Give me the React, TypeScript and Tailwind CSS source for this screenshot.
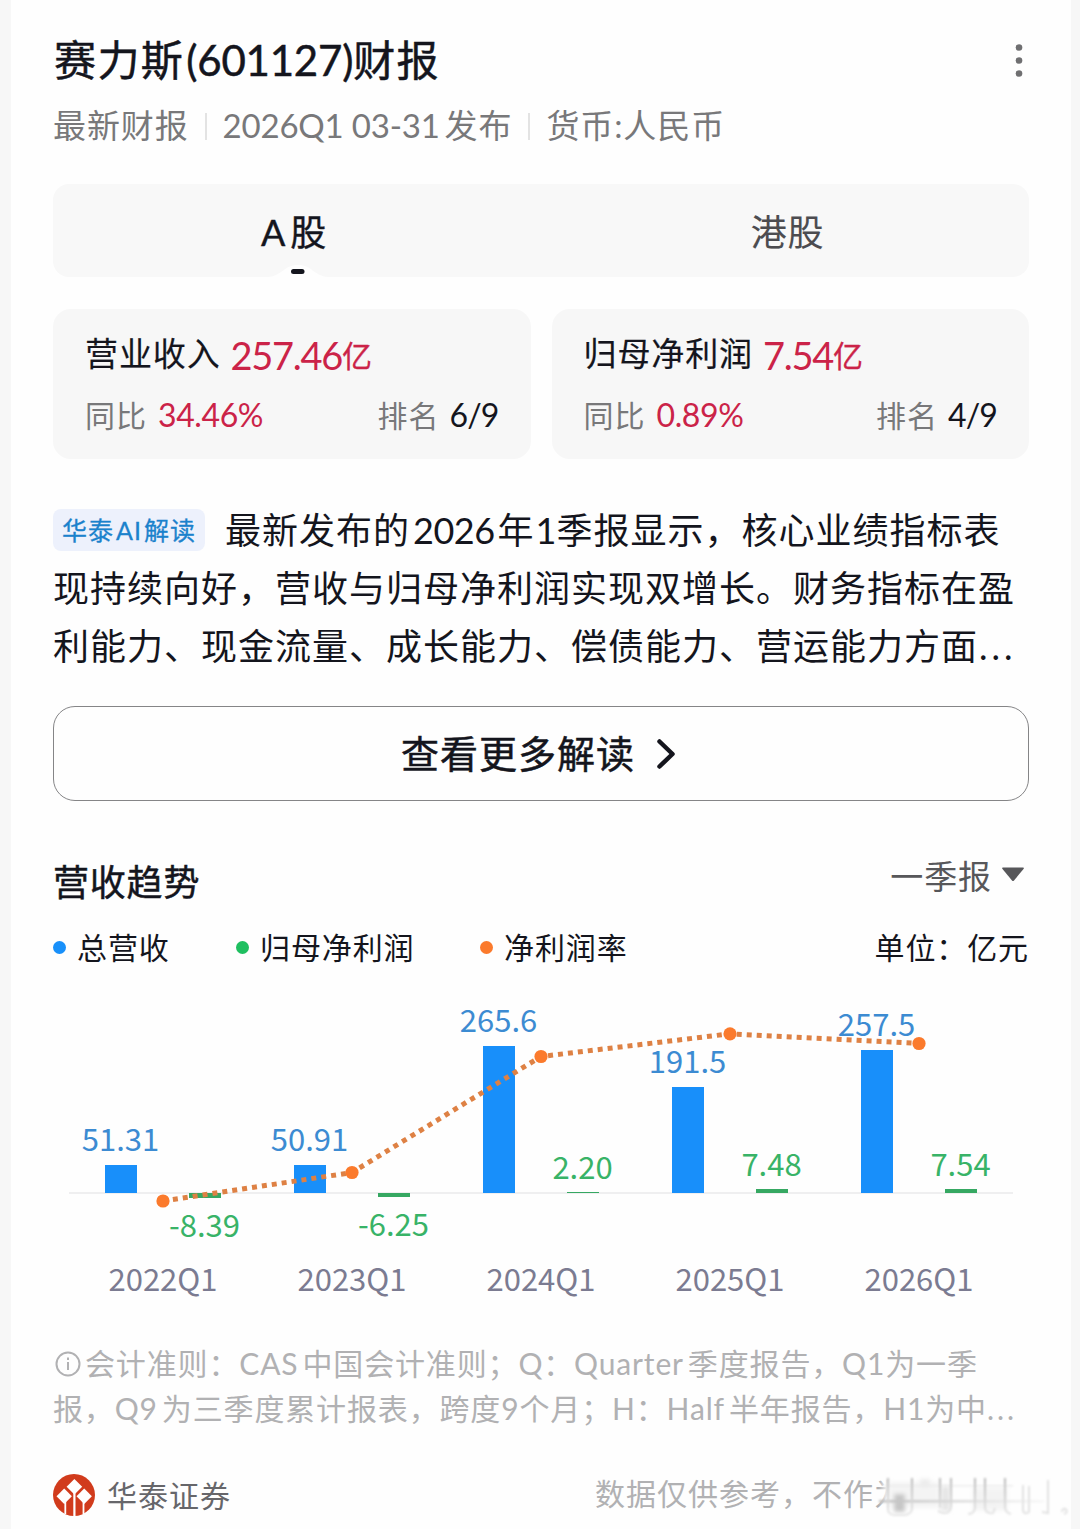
import React from 'react';

interface Metric {
  label: string;
  value: string;
  yoy: string;
  rank: string;
}

interface Quarter {
  name: string;
  revenue: string;
  profit: string;
  x: number;
  barTop: number;
  profitTop: number;
  profitHeight: number;
  profitLabelY: number;
  rateY: number;
}

const metrics: Metric[] = [
  { label: '营业收入', value: '257.46', yoy: '34.46%', rank: '6/9' },
  { label: '归母净利润', value: '7.54', yoy: '0.89%', rank: '4/9' },
];

const legend = [
  { label: '总营收', dot: 'bg-[#1890fa]', width: 'w-[183px]' },
  { label: '归母净利润', dot: 'bg-[#1fbf60]', width: 'w-[244px]' },
  { label: '净利润率', dot: 'bg-[#fb7a2c]', width: 'w-[160px]' },
];

const quarters: Quarter[] = [
  { name: '2022Q1', revenue: '51.31', profit: '-8.39', x: 110, barTop: 175, profitTop: 203, profitHeight: 5, profitLabelY: 247, rateY: 211 },
  { name: '2023Q1', revenue: '50.91', profit: '-6.25', x: 299, barTop: 175, profitTop: 203, profitHeight: 4, profitLabelY: 246, rateY: 182.5 },
  { name: '2024Q1', revenue: '265.6', profit: '2.20', x: 488, barTop: 56, profitTop: 202, profitHeight: 1, profitLabelY: 189, rateY: 66.5 },
  { name: '2025Q1', revenue: '191.5', profit: '7.48', x: 677, barTop: 97, profitTop: 199, profitHeight: 4, profitLabelY: 186, rateY: 43.8 },
  { name: '2026Q1', revenue: '257.5', profit: '7.54', x: 866, barTop: 60, profitTop: 199, profitHeight: 4, profitLabelY: 186, rateY: 53.5 },
];

const MetricCard: React.FC<Metric> = ({ label, value, yoy, rank }) => (
  <div className="h-[150px] flex-1 rounded-[18px] bg-[#f7f7f7] pl-8 pr-8 pt-[19px]">
    <div className="flex h-[52px] items-center whitespace-nowrap">
      <span className="text-[33px] tracking-[0.9px] text-[#14151d] [-webkit-text-stroke:0.2px]">{label}</span>
      <span className="ml-2.5 mt-0.5 flex items-center text-[#cb2348]">
        <span className="text-[38px] tracking-[-1.3px]">{value}</span>
        <span className="text-[30px] [-webkit-text-stroke:0.3px]">亿</span>
      </span>
    </div>
    <div className="mt-2 flex h-[54px] items-center justify-between text-[32px]">
      <div className="flex items-center">
        <span className="text-[30px] tracking-[1px] text-[#78787a]">同比</span>
        <span className="ml-[11px] tracking-[-0.4px] text-[#cb2348]">{yoy}</span>
      </div>
      <div className="flex items-center">
        <span className="text-[30px] tracking-[1px] text-[#78787a]">排名</span>
        <span className="ml-2.5 tracking-[-0.9px] text-[#14151d]">{rank}</span>
      </div>
    </div>
  </div>
);

const TrendChart: React.FC = () => (
  <svg
    width="976"
    height="320"
    viewBox="0 0 976 320"
    className="block overflow-visible font-['Noto_Sans_CJK_SC',sans-serif] text-[31px]"
    textAnchor="middle"
  >
    <rect x="16" y="202" width="944" height="2" fill="#efeff0" />
    {quarters.map((q) => (
      <g key={q.name}>
        <rect x={q.x - 58} y={q.barTop} width="32" height={203 - q.barTop} fill="#188ffa" />
        <rect x={q.x + 26} y={q.profitTop} width="32" height={q.profitHeight} fill="#36a862" />
      </g>
    ))}
    <polyline
      points={quarters.map((q) => `${q.x},${q.rateY}`).join(' ')}
      fill="none"
      stroke="#de8144"
      strokeWidth="5"
      strokeDasharray="5 5"
    />
    {quarters.map((q) => (
      <g key={q.name}>
        <circle cx={q.x} cy={q.rateY} r="6.6" fill="#fb7a2c" />
        <text x={q.x - 42.5} y={q.barTop - 14.5} fill="#3c8bd2">{q.revenue}</text>
        <text x={q.x + 41.5} y={q.profitLabelY} fill="#38b367">{q.profit}</text>
        <text x={q.x} y="301" fill="#7b7b91">{q.name}</text>
      </g>
    ))}
  </svg>
);

const BrandLogo: React.FC = () => (
  <svg width="42" height="42" viewBox="0 0 42 42">
    <circle cx="21" cy="21" r="21" fill="#d13b1c" />
    <g fill="#fff">
      <path d="M21.4 5 29.2 12.8 21.4 20.6 13.6 12.8z" />
      <path d="M11.2 14.6 18.9 22.3 11.2 30 3.5 22.3z" />
      <path d="M31.2 14.6 38.9 22.3 31.2 30 23.5 22.3z" />
      <path d="M20.3 19h2.200v23h-2.200zM11.400 27h1.800v13h-1.800zM29.600 27h1.800v13h-1.800z" />
    </g>
  </svg>
);

// Vertical streaks that trail over the end of the disclaimer
const SmearedMark: React.FC = () => (
  <svg width="194" height="54" viewBox="0 0 194 54" className="absolute -right-10 -top-0.5">
    <defs>
      <linearGradient id="fade" x1="0" x2="1">
        <stop offset="0.02" stopColor="#fefefe" stopOpacity="0" />
        <stop offset="0.07" stopColor="#fefefe" />
      </linearGradient>
      <linearGradient id="streak" x1="0" x2="1">
        <stop offset="0" stopColor="#c0c0c0" />
        <stop offset="1" stopColor="#f8f8f8" />
      </linearGradient>
      <linearGradient id="drop" x1="0" y1="8" x2="0" y2="46" gradientUnits="userSpaceOnUse">
        <stop offset="0" stopColor="#b8b8b8" />
        <stop offset="1" stopColor="#e6e6e6" />
      </linearGradient>
      <filter id="haze" x="-10%" y="-20%" width="120%" height="140%">
        <feGaussianBlur stdDeviation="2.2" />
      </filter>
      <filter id="soft" x="-10%" y="-20%" width="120%" height="140%">
        <feGaussianBlur stdDeviation="0.8" />
      </filter>
    </defs>
    <rect width="194" height="54" fill="url(#fade)" />
    <g filter="url(#haze)">
      <rect x="14" y="14" width="50" height="26" fill="#f4f4f4" />
      <rect x="19" y="26" width="11" height="18" fill="#c6c6c6" />
      <rect x="45" y="11" width="10" height="8" fill="#ececec" />
      <rect x="66" y="18" width="9" height="25" fill="#e6e6e6" />
      <rect x="98" y="20" width="34" height="22" fill="#f3f3f3" />
    </g>
    <g filter="url(#soft)" fill="none">
      <rect x="8" y="17" width="130" height="1.500" fill="#ececec" />
      <rect x="4" y="32" width="165" height="2.500" fill="url(#streak)" />
      <g stroke="url(#drop)" strokeWidth="2">
        <path d="M13 10v31q0 5 6 6h11q6-1 7-6V10" />
        <path d="M65 10v30M76 10v28q-1 8-8 7l-5-2" />
        <path d="M100 10v30q-1 6-7 6M110 10v30q1 6 8 5l2-5M130 10v30q1 5 6 6" />
      </g>
      <g stroke="#e2e2e2" strokeWidth="2">
        <path d="M148 17v26q2 4 6 1V18M173 12v33l-6-1" />
        <path d="M187 44q0-4 4-3M191 41q2 4-2 5" />
      </g>
    </g>
  </svg>
);

const App: React.FC = () => {
  return (
    <div className="h-[1529px] w-[1080px] overflow-hidden bg-[#f7f7f7] pl-[11px] pr-[9px] font-[Lato,'Noto_Sans_CJK_SC',sans-serif] text-[#14151d]">
      <div className="h-full bg-[#fefefe] px-[42px] pt-8">
        <header className="flex h-14 items-center justify-between">
          <h1 className="flex items-center whitespace-nowrap pl-px text-[42px] leading-[56px] tracking-[1.4px] [-webkit-text-stroke:0.5px]">
            赛力斯
            <span className="ml-0.5 tracking-[-0.2px]">(601127)</span>
            财报
          </h1>
          <svg width="20" height="40" viewBox="0 0 20 40" fill="#6f6f71">
            <circle cx="10" cy="7.5" r="3.3" />
            <circle cx="10" cy="20.5" r="3.3" />
            <circle cx="10" cy="33.5" r="3.3" />
          </svg>
        </header>

        <div className="mt-[13px] flex h-[50px] items-center whitespace-nowrap text-[33px] tracking-[0.9px] text-[#78787a]">
          <span>最新财报</span>
          <span className="ml-4 h-[27px] w-0.5 bg-[#e3e3e3]" />
          <span className="ml-4 tracking-[-0.2px]">2026Q1 03-31</span>
          <span className="ml-[5px]">发布</span>
          <span className="ml-4 h-[27px] w-0.5 bg-[#e3e3e3]" />
          <span className="ml-4">货币:人民币</span>
        </div>

        <div className="relative mt-[33px] flex h-[93px] rounded-[16px] bg-[#f8f8f8] text-[36px] leading-[96px] tracking-[0.8px]">
          <div className="w-[482px] text-center [-webkit-text-stroke:0.4px]">
            A<span className="ml-1">股</span>
          </div>
          <div className="flex-1 pl-[11px] text-center text-[#4c4c50] [-webkit-text-stroke:0.1px]">港股</div>
          <svg width="60" height="14" viewBox="0 0 60 14" className="absolute bottom-0 left-[215px]">
            <path d="M0 14C14 13 16 2 30 2s16 11 30 12z" fill="#fefefe" />
            <rect x="23" y="6" width="13.5" height="5" rx="2.5" fill="#14151d" />
          </svg>
        </div>

        <div className="mt-8 flex gap-[21px]">
          {metrics.map((m) => (
            <MetricCard key={m.label} {...m} />
          ))}
        </div>

        <div className="mt-[42px] whitespace-nowrap text-[36px] leading-[58px] tracking-[1px]">
          <div className="flex items-center">
            <span className="mr-5 flex h-[42px] w-[152px] items-center justify-center rounded-[8px] bg-[#edf1fc] text-[25px] tracking-[1px] text-[#1b82cc] [-webkit-text-stroke:0.3px]">
              华泰<span className="mx-0.5">AI</span>解读
            </span>
            最新发布的
            <span className="mx-[3px] tracking-[-0.5px]">2026</span>年
            <span className="ml-px">1</span>
            <span className="-ml-px">季报显示，核心业绩指标表</span>
          </div>
          <div>现持续向好，营收与归母净利润实现双增长。财务指标在盈</div>
          <div>
            利能力、现金流量、成长能力、偿债能力、营运能力方面<span className="ml-px tracking-[4px]">...</span>
          </div>
        </div>

        <button className="mt-[31px] flex h-[95px] w-full items-center justify-center rounded-[22px] border border-[#858587] pr-1 text-[38px] tracking-[1px] [-webkit-text-stroke:0.5px]">
          查看更多解读
          <svg width="22" height="34" viewBox="0 0 22 34" className="ml-5">
            <path d="M4.5 4.500 17.500 17 4.500 29.500" fill="none" stroke="#14151d" strokeWidth="4.500" strokeLinecap="round" strokeLinejoin="round" />
          </svg>
        </button>

        <div className="mt-[55px] flex h-[50px] justify-between">
          <h2 className="text-[36px] leading-[52px] tracking-[0.8px] [-webkit-text-stroke:0.5px]">营收趋势</h2>
          <div className="flex h-[41px] items-center text-[33px] tracking-[0.9px] text-[#57575a]">
            一季报
            <svg width="24" height="15" viewBox="0 0 24 15" className="-mt-[5px] ml-[9px] mr-1">
              <path d="M2 .5h20q1.500 0 .5 1.500L13 13.500q-1 1-2 0L1.500 2Q.5.5 2 .5z" fill="#57575a" />
            </svg>
          </div>
        </div>

        <div className="mt-4 flex h-[50px] items-center whitespace-nowrap text-[30px] tracking-[0.9px]">
          {legend.map((item) => (
            <div key={item.label} className={`flex items-center ${item.width}`}>
              <span className={`mr-[11px] h-[13px] w-[13px] rounded-full ${item.dot}`} />
              {item.label}
            </div>
          ))}
          <span className="ml-auto">单位：亿元</span>
        </div>

        <div className="mt-[18px]">
          <TrendChart />
        </div>

        <div className="mt-[31px] whitespace-nowrap text-[30px] leading-[45px] tracking-[0.85px] text-[#b1b1b3]">
          <div className="flex items-center">
            <svg width="28" height="28" viewBox="0 0 28 28" className="ml-0.5 mr-0.5" fill="none" stroke="#b1b1b3" strokeWidth="2">
              <circle cx="13" cy="14" r="11.500" />
              <path d="M13 12v8M13 7.500v2.500" />
            </svg>
            会计准则：CAS<span className="ml-1">中国会计准则；Q：Quarter</span>
            <span className="ml-1">季度报告，Q1为一季</span>
          </div>
          <div>
            报，Q9<span className="ml-1">为三季度累计报表，跨度9个月；H：Half</span>
            <span className="ml-1">半年报告，H1为中</span>
            <span className="tracking-[3px]">...</span>
          </div>
        </div>

        <footer className="relative mt-[39px] flex h-[50px] items-center justify-between whitespace-nowrap text-[30px] tracking-[1px]">
          <div className="flex items-center gap-3 text-[#66666a]">
            <BrandLogo />
            华泰证券
          </div>
          <span className="-mt-1 mr-[124px] text-[#b1b1b3]">数据仅供参考，不作为</span>
          <SmearedMark />
        </footer>
      </div>
    </div>
  );
};

export default App;
